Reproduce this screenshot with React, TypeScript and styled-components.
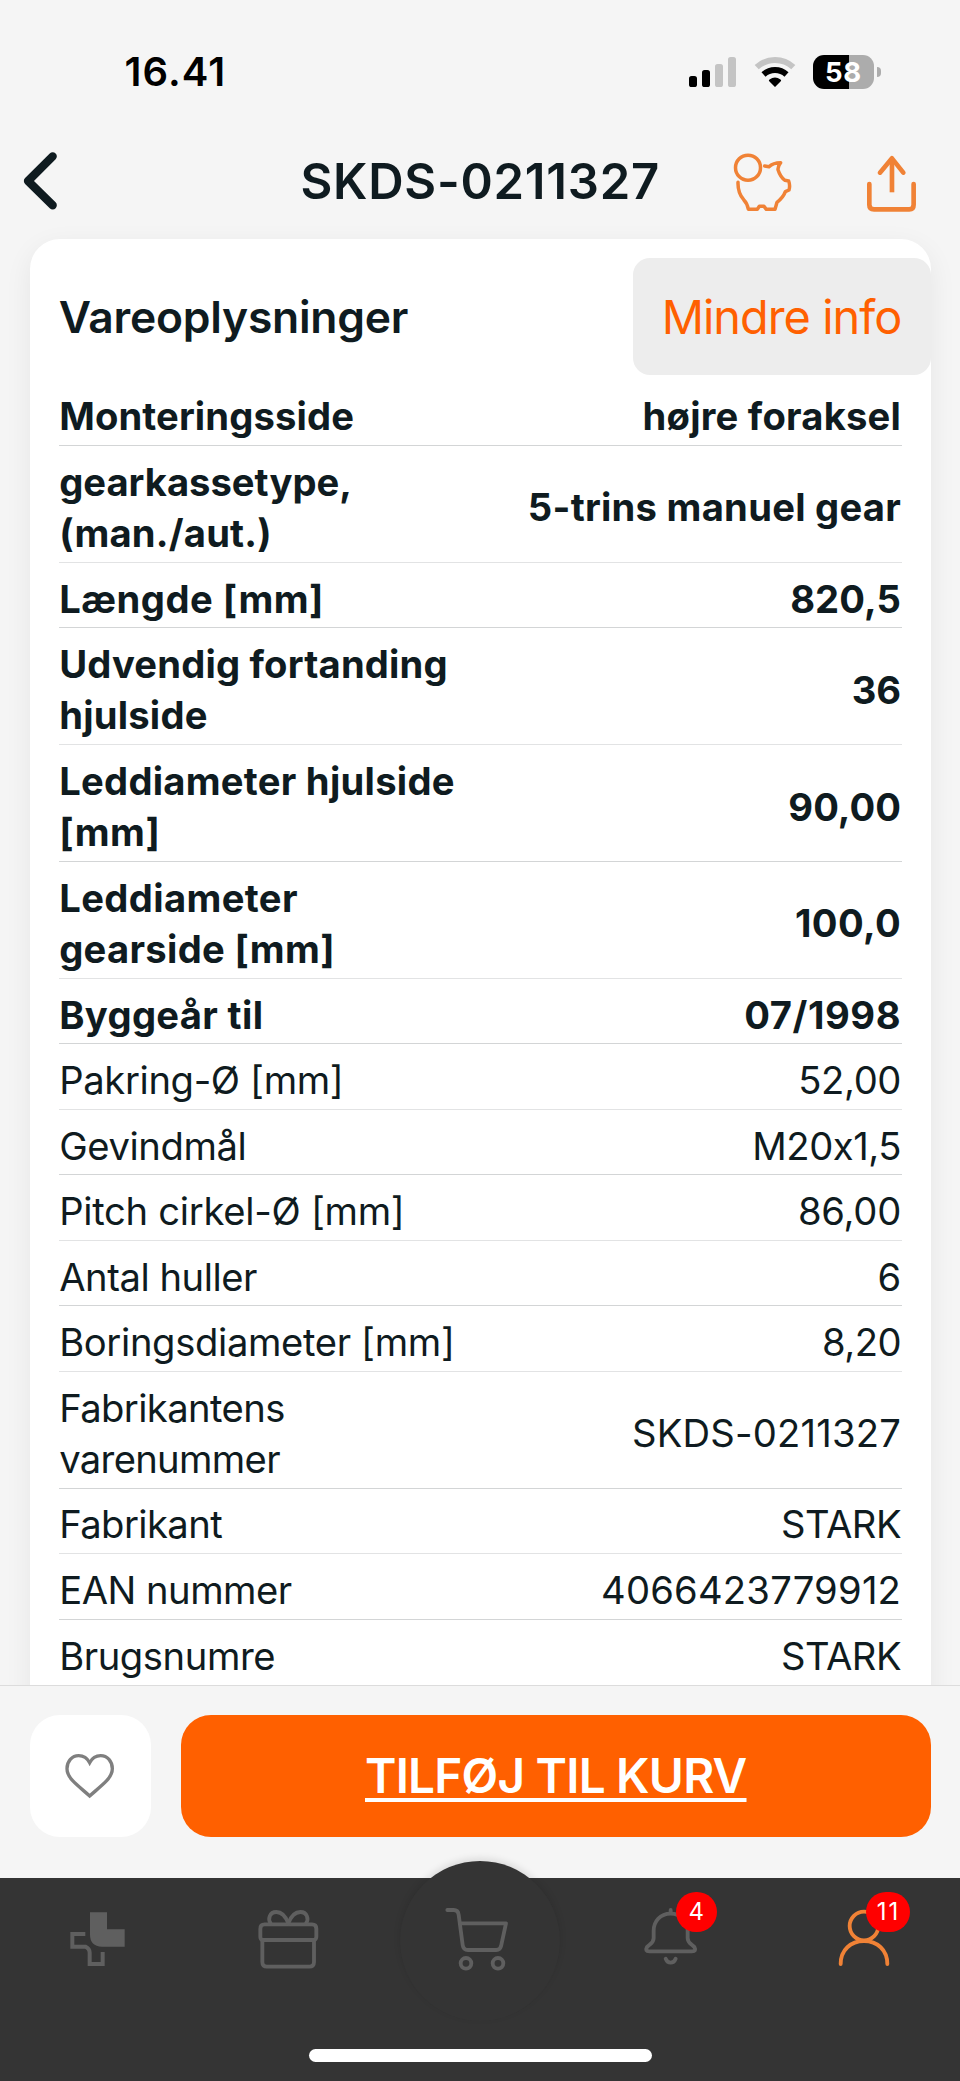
import React from 'react';
import styled, { createGlobalStyle } from 'styled-components';

const GlobalStyle = createGlobalStyle`
  * { box-sizing: border-box; }
  body { margin: 0; background: #f5f5f5; }
  button { border: 0; margin: 0; padding: 0; background: none; font: inherit; color: inherit; }
  svg { display: block; flex: none; }
`;

const Screen = styled.div`
  width: 960px;
  height: 2081px;
  display: flex;
  flex-direction: column;
  overflow: hidden;
  background: #f5f5f5;
  color: #0f1b20;
  font-family: Inter, "Liberation Sans", sans-serif;
  white-space: nowrap;
`;

const StatusBar = styled.div`
  flex: none;
  height: 143px;
  padding: 0 79.5px 0 124.5px;
  display: flex;
  align-items: center;
  justify-content: space-between;
  color: #000;
`;

const Clock = styled.span`
  font-size: 40px;
  font-weight: 600;
  letter-spacing: 1.08px;
`;

const StatusIcons = styled.div`
  display: flex;
  align-items: center;
  gap: 17.5px;
`;

const BatteryWrap = styled.div`
  display: flex;
  align-items: center;
  gap: 2.5px;
`;

const BatteryBody = styled.div`
  width: 61px;
  height: 34px;
  border-radius: 11px;
  display: flex;
  align-items: center;
  justify-content: center;
  background: linear-gradient(90deg, #000 35.5px, #acacac 35.5px);
  color: #fff;
  font-size: 27.5px;
  font-weight: 700;
  letter-spacing: 0.8px;
  line-height: 34px;
`;

const BatteryNub = styled.div`
  width: 4px;
  height: 10px;
  border-radius: 0 5px 5px 0;
  background: #acacac;
`;

const Header = styled.header`
  flex: none;
  height: 76px;
  padding: 0 41.7px 0 22px;
  display: flex;
  align-items: center;
  justify-content: space-between;
`;

const HeaderSide = styled.div<{ $end?: boolean }>`
  width: 188px;
  margin-right: ${(p) => (p.$end ? 0 : '20px')};
  display: flex;
  align-items: center;
  justify-content: ${(p) => (p.$end ? 'flex-end' : 'flex-start')};
  gap: 71.7px;
`;

const Title = styled.h1`
  margin: 0;
  flex: 1;
  text-align: center;
  font-size: 49px;
  font-weight: 600;
  letter-spacing: 0.74px;
`;

const Content = styled.main`
  flex: 1;
  min-height: 0;
  padding: 20px 29.5px 0 29.5px;
  overflow: hidden;
`;

const Card = styled.section`
  height: 1500px;
  border-radius: 30px;
  background: #fff;
  box-shadow: 0 8px 28px rgba(0, 0, 0, 0.065);
  padding-top: 19px;
`;

const CardHeader = styled.div`
  display: flex;
  align-items: center;
  justify-content: space-between;
  height: 117px;
  margin-bottom: 5.5px;
  padding-left: 29.3px;
`;

const CardTitle = styled.h2`
  margin: 0;
  font-size: 44.4px;
  font-weight: 600;
  letter-spacing: -0.24px;
`;

const InfoToggle = styled.button`
  width: 297.5px;
  height: 117px;
  padding-right: 29.2px;
  border-radius: 17px;
  background: #ededed;
  color: #ff6000;
  text-align: right;
  font-size: 46.8px;
  letter-spacing: -0.96px;
`;

const SpecList = styled.dl`
  margin: 0;
  padding: 0 29px 0 29.2px;
`;

const SpecRow = styled.div<{ $strong?: boolean }>`
  display: flex;
  align-items: center;
  justify-content: space-between;
  padding: 10.8px 0 2.43px;
  border-bottom: 1px solid #d3d5d6;
  font-size: 38.2px;
  line-height: 51.3px;
  font-weight: ${(p) => (p.$strong ? 700 : 400)};
  &:nth-child(even) { border-bottom-color: #e2e3e4; }
  &:last-child { border-bottom-color: transparent; }
`;

const SpecLabel = styled.dt`
  padding-left: 0.5px;
`;

const SpecValue = styled.dd`
  margin: 0;
  padding-right: 0.4px;
  text-align: right;
`;

const Line = styled.span<{ $track: number }>`
  display: block;
  letter-spacing: ${(p) => p.$track}px;
`;

const ActionBar = styled.div`
  flex: none;
  height: 193px;
  padding: 28.5px 29.5px 0 29.5px;
  border-top: 1px solid #dcdcdc;
  background: #f5f5f5;
  display: flex;
  align-items: flex-start;
  gap: 30px;
`;

const LikeButton = styled.button`
  flex: none;
  width: 121.5px;
  height: 122px;
  border-radius: 30px;
  background: #fff;
  display: flex;
  align-items: center;
  justify-content: center;
`;

const CartButton = styled.button`
  flex: 1;
  height: 122px;
  border-radius: 30px;
  background: #ff6000;
  color: #fff;
  font-size: 47.7px;
  font-weight: 600;
  letter-spacing: -0.78px;
  text-decoration: underline;
  text-decoration-thickness: 4.3px;
  text-underline-offset: 5px;
  text-decoration-skip-ink: none;
`;

const TabBar = styled.nav`
  flex: none;
  height: 203px;
  background: #343434;
  display: grid;
  grid-template-columns: repeat(5, 192px);
  grid-template-rows: 170px 1fr;
`;

const Tab = styled.div<{ $active?: boolean }>`
  position: relative;
  display: flex;
  justify-content: center;
  padding-top: 19px;
  color: ${(p) => (p.$active ? '#f08236' : '#5f5f5f')};
`;

const CartDisc = styled.div`
  position: absolute;
  top: -17px;
  left: 16px;
  width: 160px;
  height: 160px;
  border-radius: 50%;
  background: #343434;
  box-shadow: 0 -3px 7px rgba(0, 0, 0, 0.1);
`;

const Layer = styled.div`
  position: relative;
`;

const Badge = styled.span<{ $wide?: boolean }>`
  position: absolute;
  top: 14px;
  left: ${(p) => (p.$wide ? 98.3 : 99.7)}px;
  width: ${(p) => (p.$wide ? 43.5 : 41)}px;
  height: 40px;
  border-radius: 21px;
  background: #f00;
  color: #fff;
  font-size: 24px;
  line-height: 40px;
  text-align: center;
  letter-spacing: ${(p) => (p.$wide ? 2 : 0)}px;
  text-indent: ${(p) => (p.$wide ? 1 : 0)}px;
`;

const HomeIndicator = styled.div`
  grid-column: 1 / -1;
  justify-self: center;
  width: 343px;
  height: 13px;
  margin-top: 1px;
  border-radius: 7px;
  background: #fff;
`;

type Piece = [text: string, track: number];
interface Spec { label: Piece[]; value: Piece; strong?: boolean }

const specs: Spec[] = [
  { label: [['Monteringsside', 0.12]], value: ['højre foraksel', 0.21], strong: true },
  { label: [['gearkassetype,', 0], ['(man./aut.)', 0.19]], value: ['5-trins manuel gear', 0.26], strong: true },
  { label: [['Længde [mm]', 0.5]], value: ['820,5', 0.1], strong: true },
  { label: [['Udvendig fortanding', 0.18], ['hjulside', 0.21]], value: ['36', 0], strong: true },
  { label: [['Leddiameter hjulside', 0.26], ['[mm]', 0.5]], value: ['90,00', 0.05], strong: true },
  { label: [['Leddiameter', 0.38], ['gearside [mm]', 0.3]], value: ['100,0', 0.38], strong: true },
  { label: [['Byggeår til', 0.34]], value: ['07/1998', 0.57], strong: true },
  { label: [['Pakring-Ø [mm]', -0.36]], value: ['52,00', -0.35] },
  { label: [['Gevindmål', -0.41]], value: ['M20x1,5', -0.45] },
  { label: [['Pitch cirkel-Ø [mm]', -0.29]], value: ['86,00', -0.2] },
  { label: [['Antal huller', -0.46]], value: ['6', 0] },
  { label: [['Boringsdiameter [mm]', -0.35]], value: ['8,20', -0.5] },
  { label: [['Fabrikantens', -0.6], ['varenummer', -0.67]], value: ['SKDS-0211327', 0.2] },
  { label: [['Fabrikant', -0.58]], value: ['STARK', -0.5] },
  { label: [['EAN nummer', -0.5]], value: ['4066423779912', 0.2] },
  { label: [['Brugsnumre', -0.42]], value: ['STARK', -0.5] },
];

const SignalIcon = () => (
  <svg width="47" height="30" viewBox="0 0 47 30">
    <rect x="0" y="19" width="8" height="11" rx="2.6" fill="#000" />
    <rect x="13" y="13" width="8" height="17" rx="2.6" fill="#000" />
    <rect x="26" y="7" width="8" height="23" rx="2.6" fill="#c4c4c4" />
    <rect x="39" y="0" width="8" height="30" rx="2.6" fill="#c4c4c4" />
  </svg>
);

const WifiIcon = () => (
  <svg width="42" height="32" viewBox="0 0 42 32" fill="none">
    <path d="M2.7 11.15A27 27 0 0 1 39.3 11.15" stroke="#c4c4c4" strokeWidth="6" />
    <path d="M9.5 18.5A17 17 0 0 1 32.5 18.5" stroke="#000" strokeWidth="6" />
    <path d="M21 31L15 25Q14.500 24 15.500 23.500A9.500 9.500 0 0 1 26.500 23.500Q27.500 24 27 25Z" fill="#000" />
  </svg>
);

const BackIcon = () => (
  <svg width="36.700" height="60" viewBox="66 395 110 180" fill="none" stroke="currentColor" strokeWidth="25" strokeLinecap="round" strokeLinejoin="round">
    <path d="M158 411L84 485L158 558" />
  </svg>
);

const PiggyIcon = () => (
  <svg width="61.700" height="62" viewBox="755 390 185 186" fill="none" stroke="#f08236" strokeWidth="10.500" strokeLinecap="round" strokeLinejoin="round">
    <circle cx="803" cy="443" r="37.500" />
    <path d="M853 438L866 440Q878 428 901 428Q892 439 893 449Q900 471 914 481L925 483Q930 497 926 510L915 515Q909 532 890 547L884 568H858L851 559H837L831 568H804Q801 550 790 539Q772 518 773 487" />
  </svg>
);

const ShareIcon = () => (
  <svg width="53.300" height="63.300" viewBox="1155 388 160 190" fill="none" stroke="#f08236" strokeWidth="14" strokeLinecap="round" strokeLinejoin="round">
    <path d="M1168 493V555Q1168 569 1182 569H1288Q1301 569 1301 555V493" />
    <path d="M1200 459L1236 416L1270 459" />
    <path d="M1236 518V420" strokeLinecap="butt" />
  </svg>
);

const HeartIcon = () => (
  <svg width="54" height="50" viewBox="191 272 162 150" fill="none" stroke="#7f7f7f" strokeWidth="10" strokeLinejoin="miter">
    <path d="M271 307C263 292 250 286 238 286C218 286 203 303 203 325C203 339 210 350 220 361C232 374 252 390 271 407C290 390 310 374 322 361C332 350 339 339 339 325C339 303 324 286 304 286C292 286 279 292 271 307Z" />
  </svg>
);

const TabIcon = ({ x, children }: { x: number; children: React.ReactNode }) => (
  <svg width="84" height="84" viewBox={`${x} 711 252 252`} fill="none" stroke="currentColor" strokeWidth="11.500" strokeLinecap="round" strokeLinejoin="round">
    {children}
  </svg>
);

const CrossIcon = () => (
  <TabIcon x={162}>
    <path d="M270 757H321V808H374V860H306Q270 858 270 824Z" fill="currentColor" stroke="none" />
    <path d="M256 822H217V860H256Q269 866 269 878V912H308V876" strokeWidth="12" strokeLinecap="butt" strokeLinejoin="miter" />
  </TabIcon>
);

const GiftIcon = () => (
  <TabIcon x={738}>
    <path d="M787 840Q781 838 781 830V806Q781 793 794 793H936Q949 793 949 806V830Q949 838 942 840Z" />
    <path d="M787 840V906Q787 920 801 920H928Q942 920 942 906V840" />
    <path d="M865 790Q852 756 829 756C808 756 803 778 812 790" />
    <path d="M865 790Q878 756 901 756C922 756 927 778 918 790" />
  </TabIcon>
);

const CartIcon = () => (
  <TabIcon x={1314}>
    <path d="M1342 750H1361Q1374 750 1376 764L1388 855Q1390 870 1404 870H1489Q1500 870 1503 859L1518 790H1382" />
    <circle cx="1398" cy="910" r="16" />
    <circle cx="1494" cy="910" r="16" />
  </TabIcon>
);

const BellIcon = () => (
  <TabIcon x={450}>
    <path d="M572 750V758" />
    <path d="M572 761C540 761 521 785 521 812V834Q521 845 510 853L501 861Q494 874 508 874H636Q650 874 643 861L634 853Q623 845 623 834V812C623 785 604 761 572 761Z" />
    <path d="M557 896Q562 908 572 908Q582 908 587 896" />
  </TabIcon>
);

const PersonIcon = () => (
  <TabIcon x={1026}>
    <circle cx="1152" cy="798" r="43" />
    <path d="M1082 912C1082 870 1112 843 1152 843C1192 843 1222 870 1222 912" />
  </TabIcon>
);

export default function App() {
  return (
    <Screen>
      <GlobalStyle />
      <StatusBar>
        <Clock>16.41</Clock>
        <StatusIcons>
          <SignalIcon />
          <WifiIcon />
          <BatteryWrap>
            <BatteryBody>58</BatteryBody>
            <BatteryNub />
          </BatteryWrap>
        </StatusIcons>
      </StatusBar>
      <Header>
        <HeaderSide>
          <BackIcon />
        </HeaderSide>
        <Title>SKDS-0211327</Title>
        <HeaderSide $end>
          <PiggyIcon />
          <ShareIcon />
        </HeaderSide>
      </Header>
      <Content>
        <Card>
          <CardHeader>
            <CardTitle>Vareoplysninger</CardTitle>
            <InfoToggle>Mindre info</InfoToggle>
          </CardHeader>
          <SpecList>
            {specs.map((spec) => (
              <SpecRow key={spec.label[0][0]} $strong={spec.strong}>
                <SpecLabel>
                  {spec.label.map(([text, track]) => (
                    <Line key={text} $track={track}>{text}</Line>
                  ))}
                </SpecLabel>
                <SpecValue>
                  <Line $track={spec.value[1]}>{spec.value[0]}</Line>
                </SpecValue>
              </SpecRow>
            ))}
          </SpecList>
        </Card>
      </Content>
      <ActionBar>
        <LikeButton aria-label="Favorit">
          <HeartIcon />
        </LikeButton>
        <CartButton>TILFØJ TIL KURV</CartButton>
      </ActionBar>
      <TabBar>
        <Tab><CrossIcon /></Tab>
        <Tab><GiftIcon /></Tab>
        <Tab>
          <CartDisc />
          <Layer><CartIcon /></Layer>
        </Tab>
        <Tab>
          <BellIcon />
          <Badge>4</Badge>
        </Tab>
        <Tab $active>
          <PersonIcon />
          <Badge $wide>11</Badge>
        </Tab>
        <HomeIndicator />
      </TabBar>
    </Screen>
  );
}
